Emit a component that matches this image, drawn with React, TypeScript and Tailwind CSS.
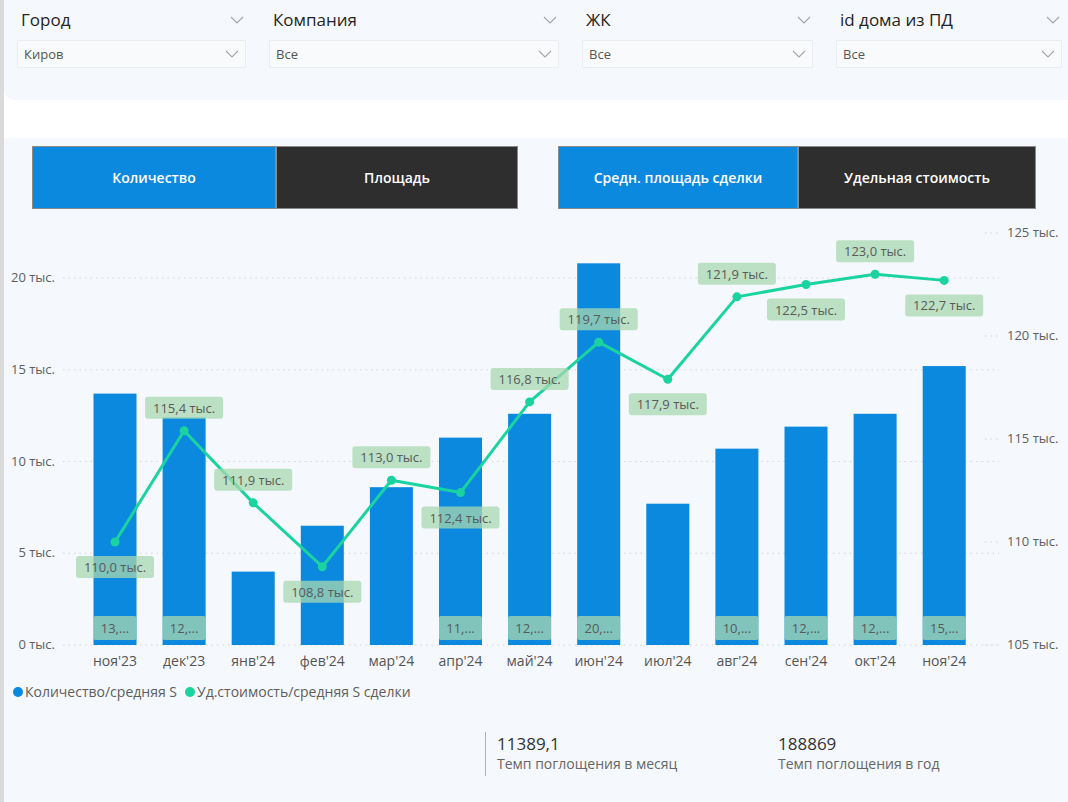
import React from "react";

const font = { fontFamily: '"Open Sans", "Noto Sans", sans-serif' };

const months = ["ноя'23", "дек'23", "янв'24", "фев'24", "мар'24", "апр'24", "май'24", "июн'24", "июл'24", "авг'24", "сен'24", "окт'24", "ноя'24"];
const bars = [13.7, 12.4, 4.0, 6.5, 8.6, 11.3, 12.6, 20.8, 7.7, 10.7, 11.9, 12.6, 15.2];
const barLabels = ["13,...", "12,...", null, null, null, "11,...", "12,...", "20,...", null, "10,...", "12,...", "12,...", "15,..."];
const price = [110.0, 115.4, 111.9, 108.8, 113.0, 112.4, 116.8, 119.7, 117.9, 121.9, 122.5, 123.0, 122.7];
const priceBelow = [true, false, false, true, false, true, false, false, true, false, true, false, true];

const X0 = 116;
const STEP = 69.1;
const BASE = 646;
const yLeft = (v: number) => BASE - v * 18.35;
const yRight = (v: number) => BASE - (v - 105) * 20.6;
const fmt = (v: number) => `${v.toFixed(1).replace(".", ",")} тыс.`;

function Chevron({ color = "#a5a5a5" }: { color?: string }) {
  return (
    <svg width="14" height="8" viewBox="0 0 14 8">
      <polyline points="1,1 7,7 13,1" fill="none" stroke={color} strokeWidth="1.1" />
    </svg>
  );
}

function Slicer({ label, value, width }: { label: string; value: string; width: string }) {
  return (
    <div className={`${width} flex flex-col`}>
      <div className="flex items-center justify-between h-[26px] pl-[4px] pr-[2px]">
        <span className="text-[17px] text-[#252423]">{label}</span>
        <Chevron />
      </div>
      <div className="mt-[7px] h-[28px] flex items-center justify-between pl-[6px] pr-[6px] bg-[#f8fafc] border border-[#eaedf1]">
        <span className="text-[13px] text-[#555] mt-[2px]">{value}</span>
        <Chevron />
      </div>
    </div>
  );
}

function Toggle({ label, active, width }: { label: string; active: boolean; width: string }) {
  return (
    <div className={`${width} h-[63px] flex items-center justify-center border border-[#8a8a8a] ${active ? "bg-[#0b89df]" : "bg-[#2e2e2e]"}`}>
      <span className="text-white text-[14px] font-semibold">{label}</span>
    </div>
  );
}

function Chart() {
  const leftTicks = [0, 5, 10, 15, 20];
  const rightTicks = [105, 110, 115, 120, 125];
  const pts = price.map((v, i) => [X0 + i * STEP, yRight(v)]);
  return (
    <svg width="1063" height="450" viewBox="5 222 1063 450" className="block" style={font}>
      {leftTicks.map((t) => (
        <g key={t}>
          <line x1="64" x2="1000" y1={yLeft(t)} y2={yLeft(t)} stroke="#d2d6da" strokeWidth="1" strokeDasharray="1.5 4" />
          <text x="56" y={yLeft(t) + 4} fontSize="13" fill="#605e5c" textAnchor="end">{t} тыс.</text>
        </g>
      ))}
      {rightTicks.map((t) => (
        <g key={t}>
          <line x1="986" x2="1000" y1={yRight(t)} y2={yRight(t)} stroke="#d2d6da" strokeWidth="1" strokeDasharray="1.5 4" />
          <text x="1008" y={yRight(t) + 4} fontSize="13" fill="#605e5c">{t} тыс.</text>
        </g>
      ))}
      {bars.map((v, i) => {
        const cx = X0 + i * STEP;
        const top = yLeft(v);
        return (
          <g key={i}>
            <rect x={cx - 21.5} y={top} width="43" height={BASE - top} fill="#0b89df" />
            {barLabels[i] && (
              <g>
                <rect x={cx - 21.5} y="617" width="43" height="24" fill="#a8d8b0" opacity="0.75" rx="2" />
                <text x={cx} y="634" fontSize="13" fill="#5a5a5a" textAnchor="middle">{barLabels[i]}</text>
              </g>
            )}
            <text x={cx} y="667" fontSize="14" fill="#555" textAnchor="middle">{months[i]}</text>
          </g>
        );
      })}
      <polyline points={pts.map((p) => p.join(",")).join(" ")} fill="none" stroke="#1ad3a0" strokeWidth="3" strokeLinejoin="round" />
      {pts.map(([x, y], i) => (
        <circle key={i} cx={x} cy={y} r="4.5" fill="#1ad3a0" />
      ))}
      {pts.map(([x, y], i) => {
        const top = priceBelow[i] ? y + 14 : y - 34;
        return (
          <g key={`l${i}`}>
            <rect x={x - 39} y={top} width="78" height="22" rx="3" fill="#a8d8b0" opacity="0.75" />
            <text x={x} y={top + 16} fontSize="13" fill="#5a5a5a" textAnchor="middle">{fmt(price[i])}</text>
          </g>
        );
      })}
    </svg>
  );
}

export default function App() {
  return (
    <div className="w-[1068px] h-[802px] bg-white flex overflow-hidden" style={font}>
      <div className="w-[4px] h-full bg-[#dadada]" />
      <div className="flex-1 flex flex-col">
        <div className="h-[100px] bg-[#f5f8fc] rounded-bl-[10px] pt-[7px] pl-[13px] flex gap-[23px]">
          <Slicer label="Город" value="Киров" width="w-[229px]" />
          <Slicer label="Компания" value="Все" width="w-[290px]" />
          <Slicer label="ЖК" value="Все" width="w-[231px]" />
          <Slicer label="id дома из ПД" value="Все" width="w-[226px]" />
        </div>
        <div className="h-[38px]" />
        <div className="flex-1 bg-[#f5f8fc] flex flex-col">
          <div className="pt-[8px] pl-[28px] flex">
            <Toggle label="Количество" active width="w-[244px]" />
            <Toggle label="Площадь" active={false} width="w-[242px]" />
            <div className="w-[40px]" />
            <Toggle label="Средн. площадь сделки" active width="w-[240px]" />
            <Toggle label="Удельная стоимость" active={false} width="w-[238px]" />
          </div>
          <div className="mt-[12px]">
            <Chart />
          </div>
          <div className="mt-[10px] pl-[9px] flex items-center text-[14px] text-[#605e5c]">
            <span className="w-[10px] h-[10px] rounded-full bg-[#0b89df] mr-[2px]" />
            <span>Количество/средняя S</span>
            <span className="w-[10px] h-[10px] rounded-full bg-[#1ad3a0] ml-[8px] mr-[2px]" />
            <span>Уд.стоимость/средняя S сделки</span>
          </div>
          <div className="mt-[30px] flex">
            <div className="ml-[481px] w-[281px] border-l border-[#b0b0b0] pl-[11px] h-[44px] flex flex-col justify-center">
              <span className="text-[17px] leading-[20px] text-[#333]">11389,1</span>
              <span className="text-[14px] leading-[20px] text-[#666]">Темп поглощения в месяц</span>
            </div>
            <div className="ml-[12px] flex flex-col justify-center">
              <span className="text-[17px] leading-[20px] text-[#333]">188869</span>
              <span className="text-[14px] leading-[20px] text-[#666]">Темп поглощения в год</span>
            </div>
          </div>
        </div>
      </div>
    </div>
  );
}
